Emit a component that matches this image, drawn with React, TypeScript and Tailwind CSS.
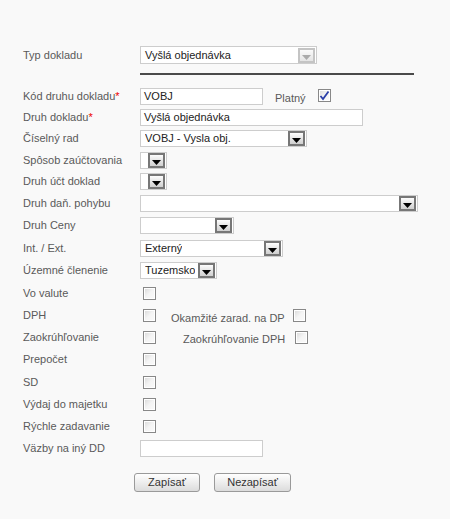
import type { ReactNode } from 'react';

// Small grey dropdown button used inside the select boxes
function DropButton({ disabled = false }: { disabled?: boolean }) {
  return (
    <span
      className={`flex h-[15px] w-[17px] shrink-0 items-end justify-center border-2 pb-[1px] ${
        disabled
          ? 'border-[#c4c4c4] bg-gradient-to-b from-[#fafafa] to-[#e4e4e4]'
          : 'border-[#777] bg-gradient-to-b from-[#fdfdfd] to-[#cfcfcf]'
      }`}
    >
      <svg width="9" height="5" viewBox="0 0 9 5">
        <path d="M0 0h9L4.5 5z" fill={disabled ? '#aaa' : '#000'} />
      </svg>
    </span>
  );
}

function Select({ value, width }: { value?: string; width: string }) {
  return (
    <div className={`flex h-[17px] items-center justify-between border border-[#cdcdcd] bg-white pl-[4px] pr-[1px] ${width}`}>
      <span className="truncate text-[11px] text-[#222]">{value}</span>
      <DropButton />
    </div>
  );
}

function Input({ value, width }: { value?: string; width: string }) {
  return (
    <div className={`flex h-[17px] items-center border border-[#cdcdcd] bg-white px-[3px] text-[11px] text-[#222] ${width}`}>
      {value}
    </div>
  );
}

function Checkbox({ checked = false }: { checked?: boolean }) {
  return (
    <span className="relative flex h-[13px] w-[13px] shrink-0 items-center justify-center border border-[#888] bg-gradient-to-br from-[#d8d8d8] via-[#f4f4f4] to-[#fafafa] shadow-[inset_0_0_0_1px_#fff]">
      {checked && (
        <svg width="11" height="11" viewBox="0 0 11 11" className="absolute">
          <path d="M1.5 6 L4 9 L9.5 1.5" stroke="#2b3fa8" strokeWidth="1.8" fill="none" />
        </svg>
      )}
    </span>
  );
}

function Row({ label, required, h, children }: { label: string; required?: boolean; h: string; children?: ReactNode }) {
  return (
    <div className={`flex items-center ${h}`}>
      <div className="w-[117px] shrink-0 text-[11px] text-[#5a5a5a]">
        {label}
        {required && <span className="text-[#e00]">*</span>}
      </div>
      <div className="flex items-center">{children}</div>
    </div>
  );
}

function Button({ children, width }: { children: ReactNode; width: string }) {
  return (
    <button className={`h-[19px] rounded-[3px] border border-[#9a9a9a] bg-gradient-to-b from-[#ffffff] to-[#dcdcdc] text-[11px] text-[#333] ${width}`}>
      {children}
    </button>
  );
}

export default function App() {
  return (
    <div className="min-h-[519px] w-[450px] bg-[#f9f9f9] pt-[46px] pl-[23px] font-['Liberation_Sans',Arial,sans-serif]">
      {/* Document type header */}
      <div className="flex h-[18px] items-center">
        <div className="w-[117px] shrink-0 text-[11px] text-[#5a5a5a]">Typ dokladu</div>
        <div className="flex h-[18px] w-[177px] items-center justify-between border border-[#cdcdcd] bg-white pl-[4px] pr-[1px]">
          <span className="text-[11px] text-[#222]">Vyšlá objednávka</span>
          <DropButton disabled />
        </div>
      </div>
      <div className="ml-[117px] mt-[9px] h-[2px] w-[274px] bg-[#4a4a4a]" />

      <div className="mt-[11px]">
        <Row label="Kód druhu dokladu" required h="h-[21px]">
          <Input value="VOBJ" width="w-[123px]" />
          <span className="ml-[12px] mt-[3px] text-[11px] text-[#5a5a5a]">Platný</span>
          <span className="ml-[12px] -mt-[2px]"><Checkbox checked /></span>
        </Row>
        <Row label="Druh dokladu" required h="h-[21px]">
          <Input value="Vyšlá objednávka" width="w-[223px]" />
        </Row>
        <Row label="Číselný rad" h="h-[21px]">
          <Select value="VOBJ - Vysla obj." width="w-[167px]" />
        </Row>
        <Row label="Spôsob zaúčtovania" h="h-[22px]">
          <Select width="w-[27px]" />
        </Row>
        <Row label="Druh účt doklad" h="h-[21px]">
          <Select width="w-[27px]" />
        </Row>
        <Row label="Druh daň. pohybu" h="h-[22px]">
          <Select width="w-[278px]" />
        </Row>
        <Row label="Druh Ceny" h="h-[23px]">
          <Select width="w-[94px]" />
        </Row>
        <Row label="Int. / Ext." h="h-[22px]">
          <Select value="Externý" width="w-[143px]" />
        </Row>
        <Row label="Územné členenie" h="h-[22px]">
          <Select value="Tuzemsko" width="w-[77px]" />
        </Row>
        <Row label="Vo valute" h="h-[24px]">
          <span className="ml-[3px]"><Checkbox /></span>
        </Row>
        <Row label="DPH" h="h-[21px]">
          <span className="ml-[3px]"><Checkbox /></span>
          <span className="ml-[15px] mt-[5px] w-[122px] text-[11px] text-[#5a5a5a]">Okamžité zarad. na DP</span>
          <Checkbox />
        </Row>
        <Row label="Zaokrúhľovanie" h="h-[22px]">
          <span className="ml-[3px]"><Checkbox /></span>
          <span className="ml-[27px] mt-[5px] w-[112px] text-[11px] text-[#5a5a5a]">Zaokrúhľovanie DPH</span>
          <Checkbox />
        </Row>
        <Row label="Prepočet" h="h-[22px]">
          <span className="ml-[3px]"><Checkbox /></span>
        </Row>
        <Row label="SD" h="h-[24px]">
          <span className="ml-[3px]"><Checkbox /></span>
        </Row>
        <Row label="Výdaj do majetku" h="h-[21px]">
          <span className="ml-[3px]"><Checkbox /></span>
        </Row>
        <Row label="Rýchle zadavanie" h="h-[22px]">
          <span className="ml-[3px]"><Checkbox /></span>
        </Row>
        <Row label="Väzby na iný DD" h="h-[22px]">
          <Input width="w-[123px]" />
        </Row>
      </div>

      <div className="mt-[14px] flex gap-[14px] pl-[111px]">
        <Button width="w-[66px]">Zapísať</Button>
        <Button width="w-[77px]">Nezapísať</Button>
      </div>
    </div>
  );
}
